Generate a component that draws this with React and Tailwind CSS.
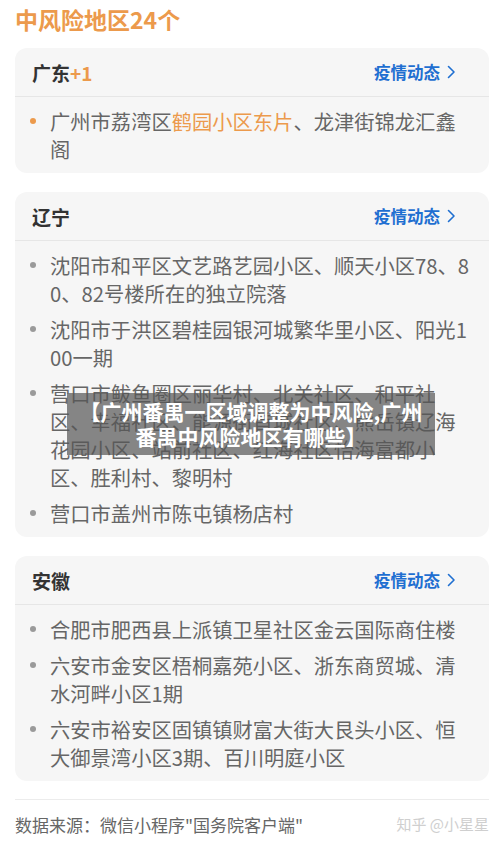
import React from 'react';

const font = { fontFamily: '"Noto Sans CJK SC", "Noto Sans", sans-serif' };

const regions = [
  {
    name: '广东',
    extra: '+1',
    dot: 'bg-[#ec9a4c]',
    items: [
      [
        { t: '广州市荔湾区' },
        { t: '鹤园小区东片', hi: true },
        { t: '、龙津街锦龙汇鑫阁' },
      ],
    ],
  },
  {
    name: '辽宁',
    dot: 'bg-[#9a9a9a]',
    items: [
      [{ t: '沈阳市和平区文艺路艺园小区、顺天小区78、80、82号楼所在的独立院落' }],
      [{ t: '沈阳市于洪区碧桂园银河城繁华里小区、阳光100一期' }],
      [{ t: '营口市鲅鱼圈区丽华村、北关社区、和平社区、幸福社区、能源街首城社区、熊岳镇辽海花园小区、站前社区、红海社区怡海富都小区、胜利村、黎明村' }],
      [{ t: '营口市盖州市陈屯镇杨店村' }],
    ],
  },
  {
    name: '安徽',
    dot: 'bg-[#9a9a9a]',
    items: [
      [{ t: '合肥市肥西县上派镇卫星社区金云国际商住楼' }],
      [{ t: '六安市金安区梧桐嘉苑小区、浙东商贸城、清水河畔小区1期' }],
      [{ t: '六安市裕安区固镇镇财富大街大艮头小区、恒大御景湾小区3期、百川明庭小区' }],
    ],
  },
];

const Chevron = () => (
  <svg width="9" height="14" viewBox="0 0 9 14" fill="none" className="ml-[7px]">
    <path d="M1.5 1.5 L7 7 L1.5 12.5" stroke="#1f6fd1" strokeWidth="1.6" strokeLinecap="round" strokeLinejoin="round" />
  </svg>
);

const RegionCard = ({ region }) => (
  <div className="bg-[#f6f6f6] rounded-[12px]">
    {/* Header */}
    <div className="h-[49px] flex items-center justify-between pl-[17px] pr-[33px] border-b border-[#e6e6e6]">
      <div className="text-[19px] font-bold text-[#333333] leading-none">
        {region.name}
        {region.extra && <span className="text-[#ec9a4c]">{region.extra}</span>}
      </div>
      <div className="flex items-center text-[16.5px] font-bold text-[#1f6fd1] leading-none">
        疫情动态
        <Chevron />
      </div>
    </div>

    {/* Items */}
    <div className="flex flex-col gap-[8px] pt-[10px] pb-[10px] pr-[16px]">
      {region.items.map((parts, i) => (
        <div key={i} className="flex items-start">
          <span className={`w-[6px] h-[6px] rounded-full mt-[11px] ml-[15px] mr-[14px] shrink-0 ${region.dot}`} />
          <p className="flex-1 text-[20.3px] leading-[28px] text-[#666666] break-all">
            {parts.map((p, j) => (
              <span key={j} className={p.hi ? 'text-[#ec9a4c]' : ''}>
                {p.t}
              </span>
            ))}
          </p>
        </div>
      ))}
    </div>
  </div>
);

export default function App() {
  return (
    <div className="relative w-[504px] h-[848px] bg-white overflow-hidden px-[15px]" style={font}>
      <h1 className="pt-[4px] text-[23px] leading-[30px] font-bold text-[#ec9a4c]">中风险地区24个</h1>

      <div className="mt-[14px] flex flex-col gap-[19px]">
        {regions.map((r) => (
          <RegionCard key={r.name} region={r} />
        ))}
      </div>

      <div className="mt-[18px] border-t border-[#ececec] flex items-center justify-between h-[50px]">
        <span className="text-[17px] text-[#666666]">数据来源：微信小程序"国务院客户端"</span>
        <span className="text-[15px] text-[#cfcfcf]">知乎 @小星星</span>
      </div>

      {/* Title overlay */}
      <div className="absolute left-[67px] top-[393px] w-[368px] h-[62px] bg-[#555555]/70 flex items-center justify-center">
        <p className="text-white font-bold text-[21px] leading-[25px] text-center whitespace-nowrap">
          【广州番禺一区域调整为中风险,广州
          <br />
          番禺中风险地区有哪些】
        </p>
      </div>
    </div>
  );
}
